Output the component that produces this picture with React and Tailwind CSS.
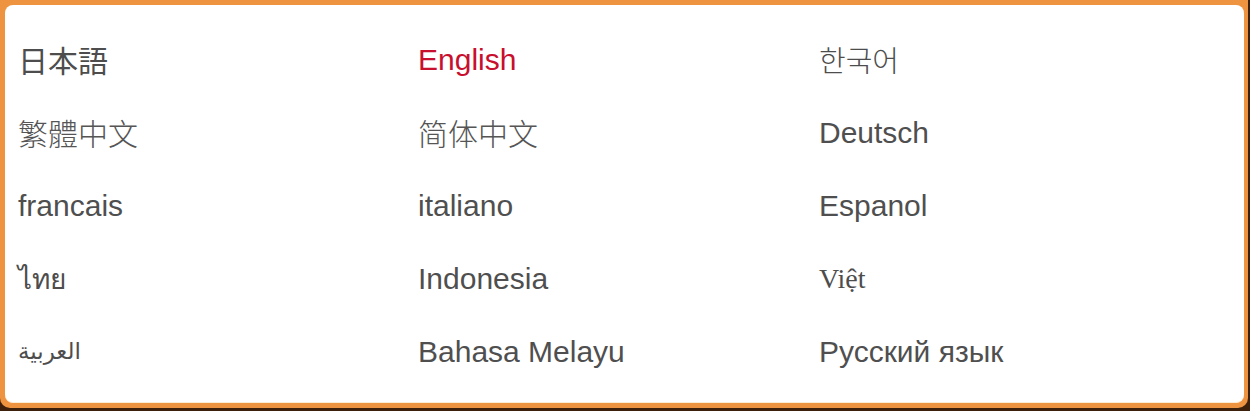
export default function App() {
  const sans = { fontFamily: '"Liberation Sans", Arial, sans-serif' };
  const items = [
    { t: "日本語", cls: "text-[30px] text-[#4d4d4d] font-['Noto_Sans_CJK_JP',sans-serif]" },
    { t: "English", cls: "text-[30px] text-[#c8102e] font-['Liberation_Sans',Arial,sans-serif]" },
    { t: "한국어", cls: "text-[29px] font-light text-[#4d4d4d] font-['Noto_Sans_CJK_KR',sans-serif]" },
    { t: "繁體中文", cls: "text-[30px] font-light text-[#555] font-['Noto_Sans_CJK_TC',sans-serif]" },
    { t: "简体中文", cls: "text-[30px] font-light text-[#555] font-['Noto_Sans_CJK_SC',sans-serif]" },
    { t: "Deutsch", cls: "text-[30px] text-[#4f4f4f] font-['Liberation_Sans',Arial,sans-serif]" },
    { t: "francais", cls: "text-[30px] text-[#4f4f4f] font-['Liberation_Sans',Arial,sans-serif]" },
    { t: "italiano", cls: "text-[30px] text-[#4f4f4f] font-['Liberation_Sans',Arial,sans-serif]" },
    { t: "Espanol", cls: "text-[30px] text-[#4f4f4f] font-['Liberation_Sans',Arial,sans-serif]" },
    { t: "ไทย", cls: "text-[28px] font-medium text-[#4d4d4d] font-['Noto_Sans',sans-serif]" },
    { t: "Indonesia", cls: "text-[30px] text-[#4f4f4f] font-['Liberation_Sans',Arial,sans-serif]" },
    { t: "Việt", cls: "text-[28px] text-[#4d4d4d] font-['Liberation_Serif','Times_New_Roman',serif]" },
    { t: "العربية", cls: "text-[23px] text-[#4d4d4d] font-['DejaVu_Sans',serif]" },
    { t: "Bahasa Melayu", cls: "text-[30px] text-[#4f4f4f] font-['Liberation_Sans',Arial,sans-serif]" },
    { t: "Русский язык", cls: "text-[30px] text-[#4f4f4f] font-['Liberation_Sans',Arial,sans-serif]" },
  ];
  return (
    <div className="w-[1250px] h-[411px] bg-[#3d200c] overflow-hidden" style={sans}>
      <div className="w-[1248px] h-[408px] bg-[#ee9440] rounded-b-[10px] pt-[5px] pl-[5px] pr-[4px] pb-[5px]">
        <div className="w-full h-full bg-white rounded-[8px] border-b border-[#fbeed8] pl-[13px] pt-[18px]">
          <div className="grid grid-cols-[400px_401px_400px] auto-rows-[73px]">
            {items.map((it, i) => (
              <div key={i} className="h-[73px] flex items-start">
                <div className={"h-[73px] leading-[73px] " + it.cls}>{it.t}</div>
              </div>
            ))}
          </div>
        </div>
      </div>
    </div>
  );
}
